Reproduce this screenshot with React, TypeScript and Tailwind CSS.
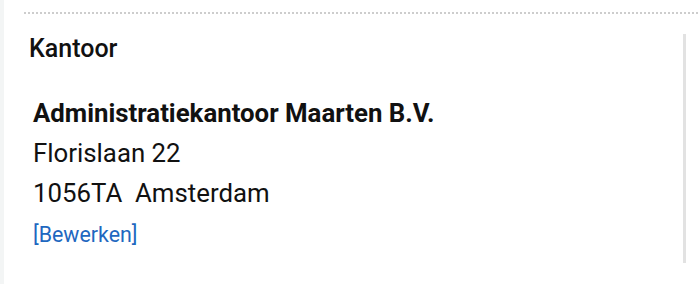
export default function App() {
  return (
    <div className="flex h-[284px] w-[700px] bg-white font-['Roboto',sans-serif] text-[#111]">
      {/* left gutter */}
      <div className="w-1 shrink-0 bg-[#f3f5f5]" />

      <div className="flex-1 pl-5 pt-3">
        {/* dotted separator */}
        <div className="h-[2px] bg-[linear-gradient(to_right,#cdcdcd_50%,transparent_50%)] bg-[length:4px_2px]" />

        {/* Kantoor panel */}
        <div className="mt-5 h-[229px] w-[662px] border-r-[3px] border-[#e2e2e2] pt-[1px] pl-[5px]">
          <h2 className="text-[25px] leading-[28px] font-medium">Kantoor</h2>
          <div className="mt-[30px] pl-1">
            <div className="text-[25.8px] leading-[40px] font-bold">Administratiekantoor Maarten B.V.</div>
            <div className="text-[25.8px] leading-[40px]">Florislaan 22</div>
            <div className="text-[25.8px] leading-[40px] whitespace-pre">1056TA  Amsterdam</div>
            <a href="#" className="mt-[2px] block text-[21.4px] leading-[40px] text-[#1f68c0]">
              [Bewerken]
            </a>
          </div>
        </div>
      </div>
    </div>
  );
}
